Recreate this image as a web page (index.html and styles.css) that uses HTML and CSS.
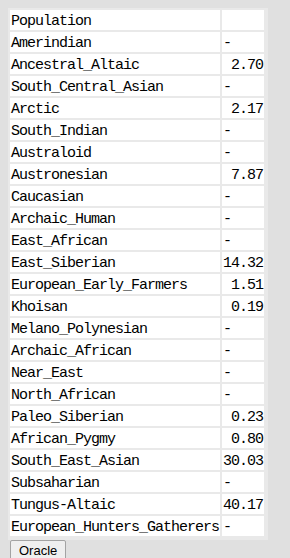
FILE: index.html
```html
<!DOCTYPE html>
<html>
<head>
<meta charset="utf-8">
<link rel="stylesheet" href="styles.css">
</head>
<body>
<table class="pop">
<tr><td class="name">Population</td><td class="val"></td></tr>
<tr><td class="name">Amerindian</td><td class="val dash">-</td></tr>
<tr><td class="name">Ancestral_Altaic</td><td class="val">2.70</td></tr>
<tr><td class="name">South_Central_Asian</td><td class="val dash">-</td></tr>
<tr><td class="name">Arctic</td><td class="val">2.17</td></tr>
<tr><td class="name">South_Indian</td><td class="val dash">-</td></tr>
<tr><td class="name">Australoid</td><td class="val dash">-</td></tr>
<tr><td class="name">Austronesian</td><td class="val">7.87</td></tr>
<tr><td class="name">Caucasian</td><td class="val dash">-</td></tr>
<tr><td class="name">Archaic_Human</td><td class="val dash">-</td></tr>
<tr><td class="name">East_African</td><td class="val dash">-</td></tr>
<tr><td class="name">East_Siberian</td><td class="val">14.32</td></tr>
<tr><td class="name">European_Early_Farmers</td><td class="val">1.51</td></tr>
<tr><td class="name">Khoisan</td><td class="val">0.19</td></tr>
<tr><td class="name">Melano_Polynesian</td><td class="val dash">-</td></tr>
<tr><td class="name">Archaic_African</td><td class="val dash">-</td></tr>
<tr><td class="name">Near_East</td><td class="val dash">-</td></tr>
<tr><td class="name">North_African</td><td class="val dash">-</td></tr>
<tr><td class="name">Paleo_Siberian</td><td class="val">0.23</td></tr>
<tr><td class="name">African_Pygmy</td><td class="val">0.80</td></tr>
<tr><td class="name">South_East_Asian</td><td class="val">30.03</td></tr>
<tr><td class="name">Subsaharian</td><td class="val dash">-</td></tr>
<tr><td class="name">Tungus-Altaic</td><td class="val">40.17</td></tr>
<tr><td class="name">European_Hunters_Gatherers</td><td class="val dash">-</td></tr>
</table>
<button class="oracle">Oracle</button>
</body>
</html>
```
FILE: styles.css
```css
html {
  overflow: hidden;
  background: #e0e0e0;
}
body {
  margin: 8px;
  background: #e0e0e0;
}
.pop {
  border-collapse: separate;
  border-spacing: 2px;
  padding: 0 2px 2px 0;
  background: #e9e9e9;
  font-family: "Liberation Mono", "DejaVu Sans Mono", monospace;
  font-size: 15px;
  letter-spacing: -1px;
  line-height: 17px;
  color: #000;
}
.pop td {
  background: #fff;
  padding: 3px 1px 0 1px;
  height: 17px;
  white-space: nowrap;
}
.val {
  width: 40px;
  text-align: right;
}
.val.dash {
  text-align: left;
}
.oracle {
  display: block;
  margin: 0 0 0 2px;
  font-family: "Liberation Sans", Arial, sans-serif;
  font-size: 13px;
  color: #000;
  background: #efefef;
  border: 1px solid #a3a3a3;
  border-radius: 2px;
  padding: 2px 8px 3px;
  height: 22px;
}
```
